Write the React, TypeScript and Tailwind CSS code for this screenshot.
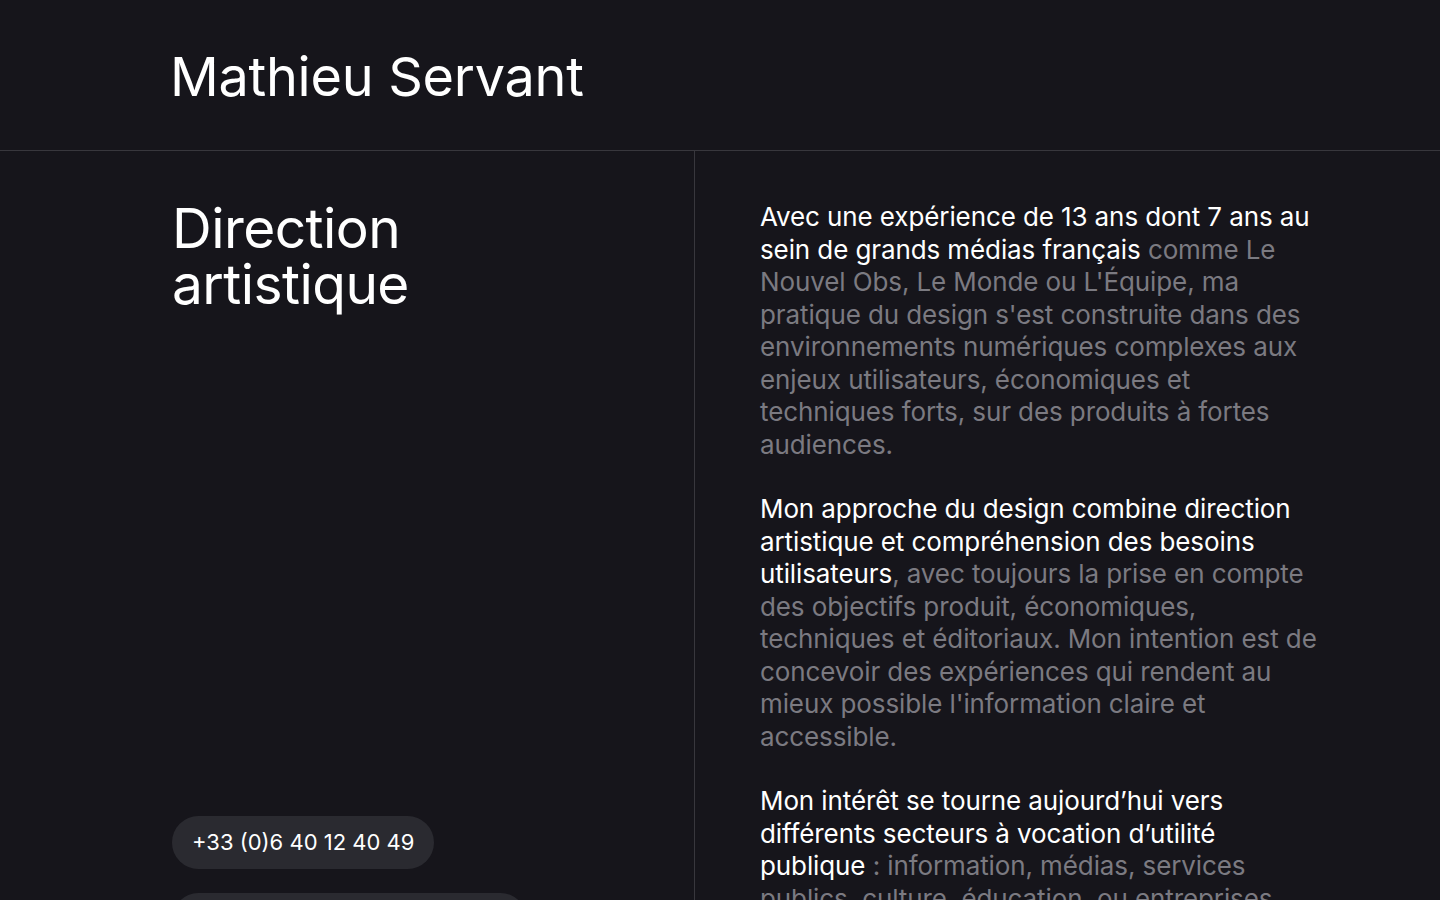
import React from 'react';

const paragraphs: { lead: string; rest: string }[] = [
  {
    lead: 'Avec une expérience de 13 ans dont 7 ans au sein de grands médias français',
    rest: " comme Le Nouvel Obs, Le Monde ou L'Équipe, ma pratique du design s'est construite dans des environnements numériques complexes aux enjeux utilisateurs, économiques et techniques forts, sur des produits à fortes audiences.",
  },
  {
    lead: 'Mon approche du design combine direction artistique et compréhension des besoins utilisateurs',
    rest: ", avec toujours la prise en compte des objectifs produit, économiques, techniques et éditoriaux. Mon intention est de concevoir des expériences qui rendent au mieux possible l'information claire et accessible.",
  },
  {
    lead: 'Mon intérêt se tourne aujourd’hui vers différents secteurs à vocation d’utilité publique',
    rest: ' : information, médias, services publics, culture, éducation, ou entreprises engagées, où le design peut avoir un impact concret sur le quotidien des gens.',
  },
];

const App: React.FC = () => {
  return (
    <div className="min-h-screen bg-[#16151b] text-white font-['Inter','Liberation_Sans',sans-serif]">
      <header className="h-[151px] border-b border-[#38373d] px-[170px] pt-[47px]">
        <h1 className="text-[54px] leading-[1.1] tracking-[-0.005em]">Mathieu Servant</h1>
      </header>

      <div className="flex">
        <aside className="w-[695px] shrink-0 border-r border-[#38373d] h-[749px] flex flex-col justify-between pl-[172px] pt-[49px]">
          <h2 className="text-[55px] leading-[56px] tracking-[-0.01em]">
            Direction
            <br />
            artistique
          </h2>
          <div className="flex flex-col items-start gap-6 -mb-[46px]">
            <a className="h-[53px] px-5 rounded-full bg-[#2a2a30] flex items-center text-[22px]">
              +33 (0)6 40 12 40 49
            </a>
            <a className="h-[53px] px-5 rounded-full bg-[#2a2a30] flex items-center text-[22px]">
              mathieu.servant.d@gmail.com
            </a>
          </div>
        </aside>

        <main className="flex-1 pl-[65px] pt-[50px] pr-[100px]">
          <div className="max-w-[562px] flex flex-col gap-8 text-[26px] leading-[32.5px] tracking-[-0.004em]">
            {paragraphs.map((p, i) => (
              <p key={i}>
                <span className="text-white">{p.lead}</span>
                <span className="text-[#7b7a81]">{p.rest}</span>
              </p>
            ))}
          </div>
        </main>
      </div>
    </div>
  );
};

export default App;
